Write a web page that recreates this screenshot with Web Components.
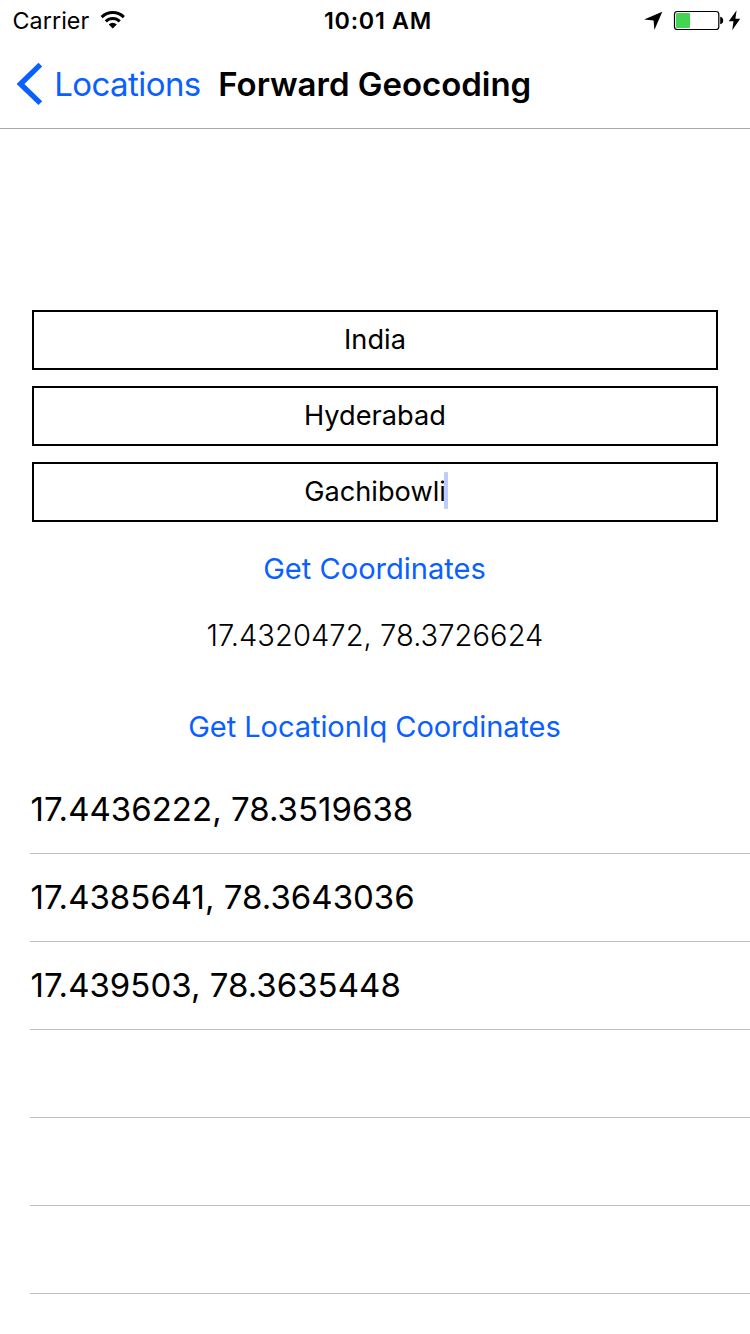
<!DOCTYPE html>
<html lang="en">
<head>
<meta charset="utf-8">
<title>Forward Geocoding</title>
<style>
body { margin: 0; background: #fff; }
</style>
</head>
<body>
<geo-screen></geo-screen>
<script>
const define = (name, html) => customElements.define(name, class extends HTMLElement {
  constructor() {
    super();
    const t = document.createElement('template');
    t.innerHTML = html;
    this.attachShadow({ mode: 'open' }).append(t.content.cloneNode(true));
  }
});

define('status-bar', `
<style>
:host { display: grid; grid-template-columns: 1fr auto 1fr; align-items: center; height: 40px; padding: 0 9px 0 12px; box-sizing: border-box; font-size: 23.3px; line-height: 38px; }
.left, .right { display: flex; align-items: center; height: 40px; }
.left { gap: 10.5px; letter-spacing: .07px; }
.left span { padding: 2px 0 0 .5px; }
.right { justify-content: flex-end; }
.time { font-weight: 600; letter-spacing: .72px; padding: 2px 0 0 3px; }
svg { display: block; }
</style>
<div class="left"><span>Carrier</span>
<svg width="26" height="40" viewBox="100 0 26 40"><path d="M100.6 16.1 A17 17 0 0 1 124.9 16.1 L122.8 18.2 A14 14 0 0 0 102.7 18.2Z M104.7 20.3 A11.3 11.3 0 0 1 120.8 20.3 L118.7 22.4 A8.4 8.4 0 0 0 106.8 22.4Z M108.7 24.4 A5.7 5.7 0 0 1 116.8 24.4 L112.75 28.6Z"/></svg></div>
<div class="time">10:01 AM</div>
<div class="right">
<svg width="98" height="40" viewBox="643 0 98 40"><path d="M662.3 11.8 L654.4 29.9 L653.6 20.5 L644.1 19.6Z"/><rect x="674.5" y="11.5" width="44.3" height="18" rx="2.8" fill="#fff" stroke="#000" stroke-width="1.2"/><rect x="676" y="13" width="14" height="15" rx="1" fill="#43d551"/><path d="M720.2 16.8 Q723.2 17.2 723.2 20.5 Q723.2 23.8 720.2 24.2Z"/><path d="M736.6 10.2 L728.8 21.2 L733.5 21.2 L732.2 30.2 L740.2 18.7 L735.4 18.7Z"/></svg></div>`);

define('nav-bar', `
<style>
:host { display: flex; align-items: center; height: 89px; box-sizing: border-box; border-bottom: 1px solid #a7a7aa; padding-left: 16px; font-size: 33px; line-height: 88px; white-space: nowrap; }
svg { display: block; }
.back { display: flex; align-items: center; color: #0a60ff; width: 202.3px; }
.back span { margin-left: 10.2px; letter-spacing: -.57px; }
.title { font-weight: 600; letter-spacing: -.03px; }
</style>
<div class="back"><svg width="28" height="44" viewBox="16 62 28 44"><path d="M38.5 62.7 L42.2 66.5 L24.4 84 L42.2 101.3 L38.5 105.1 L16.6 84Z" fill="currentColor"/></svg><span><slot name="back"></slot></span></div>
<div class="title"><slot></slot></div>`);

define('text-box', `
<style>
:host { display: flex; justify-content: center; align-items: center; height: 60px; box-sizing: border-box; border: 2px solid #000; font-size: 27.2px; line-height: 54px; }
.wrap { position: relative; padding-bottom: 1px; }
.caret { display: none; position: absolute; left: 100%; margin-left: -1.8px; top: 7.5px; width: 4px; height: 37px; border-radius: 1px; background: #bdcbfd; }
:host([focused]) .caret { display: block; }
</style>
<div class="wrap"><slot></slot><i class="caret"></i></div>`);

define('link-button', `
<style>
:host { display: block; text-align: center; color: #0a60ff; font-size: 29.1px; line-height: 60px; height: 60px; }
</style><slot></slot>`);

define('coordinate-label', `
<style>
:host { display: block; text-align: center; font-size: 29.1px; font-weight: 300; line-height: 40px; height: 40px; letter-spacing: .05px; }
</style><slot></slot>`);

define('list-row', `
<style>
:host { display: block; height: 88px; box-sizing: border-box; margin-left: 30px; padding-left: .6px; border-bottom: 1px solid #bcbbc1; font-size: 33px; line-height: 86px; letter-spacing: .02px; }
</style><slot></slot>`);

define('geo-screen', `
<style>
:host { display: flex; flex-direction: column; width: 750px; height: 1334px; overflow: hidden; background: #fff; color: #000; font-family: Inter, "Liberation Sans", sans-serif; }
.fields { display: grid; gap: 16px; padding: 181px 32px 0; }
.first { margin-top: 17px; letter-spacing: -.02px; }
.label { margin-top: 17px; }
.second { margin-top: 41px; letter-spacing: -.1px; }
.first, .second { padding-right: 1px; }
.list { margin-top: 9px; }
</style>
<status-bar></status-bar>
<nav-bar><span slot="back">Locations</span>Forward Geocoding</nav-bar>
<div class="fields"><text-box>India</text-box><text-box>Hyderabad</text-box><text-box focused>Gachibowli</text-box></div>
<link-button class="first">Get Coordinates</link-button>
<coordinate-label class="label">17.4320472, 78.3726624</coordinate-label>
<link-button class="second">Get LocationIq Coordinates</link-button>
<div class="list">
<list-row>17.4436222, 78.3519638</list-row><list-row>17.4385641, 78.3643036</list-row><list-row>17.439503, 78.3635448</list-row><list-row></list-row><list-row></list-row><list-row></list-row>
</div>`);
</script>
</body>
</html>
